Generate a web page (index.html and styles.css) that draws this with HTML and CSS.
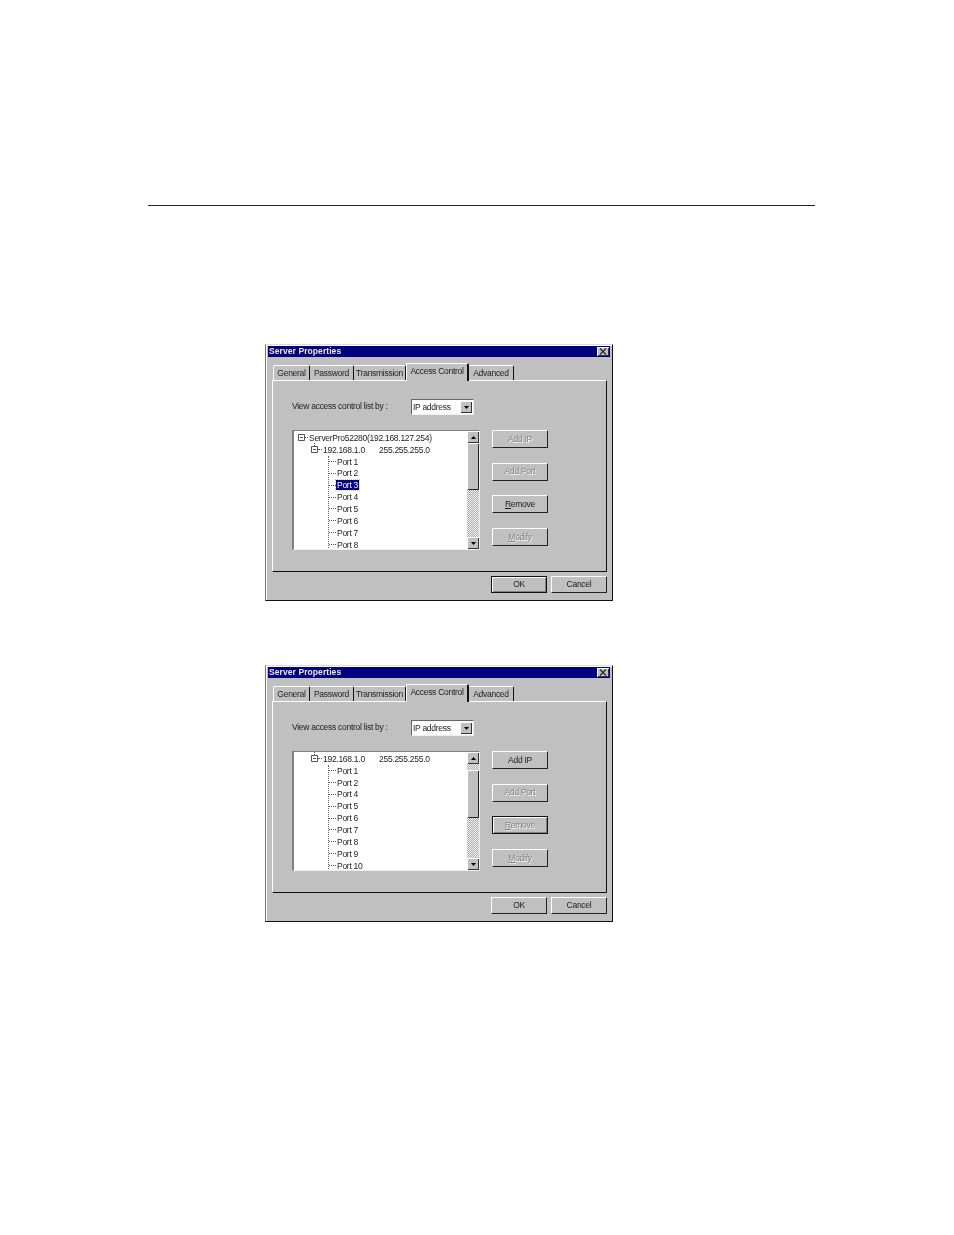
FILE: index.html
```html
<!DOCTYPE html>
<html lang="en">
<head>
<meta charset="utf-8">
<title>Server Properties</title>
<link rel="stylesheet" href="styles.css">
</head>
<body>
<hr class="rule">
<section class="dialog first">
  <header class="titlebar"><span>Server Properties</span><span class="close"><svg width="8" height="7" viewBox="0 0 8 7"><path d="M1 .5L7 6.5M7 .5L1 6.5" stroke="#222" stroke-width="1.1" fill="none"/></svg></span></header>
  <nav class="tabs">
    <span class="tab t1">General</span><span class="tab t2">Password</span><span class="tab t3">Transmission</span><span class="tab active">Access Control</span><span class="tab t5">Advanced</span>
  </nav>
  <div class="panel">
    <div class="viewrow">
      <span class="viewlabel">View access control list by :</span>
      <span class="combo"><span class="combotext">IP address</span><span class="combobtn"><svg width="5" height="3" viewBox="0 0 5 3"><path d="M0 0H5L2.5 3Z" fill="#000"/></svg></span></span>
    </div>
    <div class="listrow">
      <div class="tree">
        <div class="rows">
          <div class="row root"><svg class="box" width="7" height="7" viewBox="0 0 7 7"><path d="M.5.5h6v6h-6zM2 3.5h3" stroke="#555" fill="#fff"/></svg><span class="dash"></span><span>ServerPro52280(192.168.127.254)</span></div>
          <div class="row net"><svg class="box" width="7" height="7" viewBox="0 0 7 7"><path d="M3.5-3V0" stroke="#555" stroke-dasharray="1 1"/><path d="M.5.5h6v6h-6zM2 3.5h3" stroke="#555" fill="#fff"/></svg><span class="dash"></span><span class="ip">192.168.1.0</span><span>255.255.255.0</span></div>
          <div class="ports">
            <div class="row port"><span class="dash"></span><span>Port 1</span></div>
            <div class="row port"><span class="dash"></span><span>Port 2</span></div>
            <div class="row port"><span class="dash"></span><span class="sel">Port 3</span></div>
            <div class="row port"><span class="dash"></span><span>Port 4</span></div>
            <div class="row port"><span class="dash"></span><span>Port 5</span></div>
            <div class="row port"><span class="dash"></span><span>Port 6</span></div>
            <div class="row port"><span class="dash"></span><span>Port 7</span></div>
            <div class="row port"><span class="dash"></span><span>Port 8</span></div>
          </div>
        </div>
        <div class="scroll">
          <span class="sbtn"><svg width="5" height="3" viewBox="0 0 5 3"><path d="M0 3H5L2.5 0Z" fill="#000"/></svg></span>
          <span class="thumb thumb-a"></span>
          <span class="track"></span>
          <span class="sbtn"><svg width="5" height="3" viewBox="0 0 5 3"><path d="M0 0H5L2.5 3Z" fill="#000"/></svg></span>
        </div>
      </div>
      <div class="actions">
        <span class="btn off">Add IP</span>
        <span class="btn off">Add Port</span>
        <span class="btn"><u>R</u>emove</span>
        <span class="btn off"><u>M</u>odify</span>
      </div>
    </div>
  </div>
  <footer class="foot"><span class="btn wide focus">OK</span><span class="btn wide">Cancel</span></footer>
</section>

<section class="dialog second">
  <header class="titlebar"><span>Server Properties</span><span class="close"><svg width="8" height="7" viewBox="0 0 8 7"><path d="M1 .5L7 6.5M7 .5L1 6.5" stroke="#222" stroke-width="1.1" fill="none"/></svg></span></header>
  <nav class="tabs">
    <span class="tab t1">General</span><span class="tab t2">Password</span><span class="tab t3">Transmission</span><span class="tab active">Access Control</span><span class="tab t5">Advanced</span>
  </nav>
  <div class="panel">
    <div class="viewrow">
      <span class="viewlabel">View access control list by :</span>
      <span class="combo"><span class="combotext">IP address</span><span class="combobtn"><svg width="5" height="3" viewBox="0 0 5 3"><path d="M0 0H5L2.5 3Z" fill="#000"/></svg></span></span>
    </div>
    <div class="listrow">
      <div class="tree">
        <div class="rows">
          <div class="row net"><svg class="box" width="7" height="7" viewBox="0 0 7 7"><path d="M3.5-3V0" stroke="#555" stroke-dasharray="1 1"/><path d="M.5.5h6v6h-6zM2 3.5h3" stroke="#555" fill="#fff"/></svg><span class="dash"></span><span class="ip">192.168.1.0</span><span>255.255.255.0</span></div>
          <div class="ports">
            <div class="row port"><span class="dash"></span><span>Port 1</span></div>
            <div class="row port"><span class="dash"></span><span>Port 2</span></div>
            <div class="row port"><span class="dash"></span><span>Port 4</span></div>
            <div class="row port"><span class="dash"></span><span>Port 5</span></div>
            <div class="row port"><span class="dash"></span><span>Port 6</span></div>
            <div class="row port"><span class="dash"></span><span>Port 7</span></div>
            <div class="row port"><span class="dash"></span><span>Port 8</span></div>
            <div class="row port"><span class="dash"></span><span>Port 9</span></div>
            <div class="row port"><span class="dash"></span><span>Port 10</span></div>
          </div>
        </div>
        <div class="scroll">
          <span class="sbtn"><svg width="5" height="3" viewBox="0 0 5 3"><path d="M0 3H5L2.5 0Z" fill="#000"/></svg></span>
          <span class="track top"></span>
          <span class="thumb thumb-b"></span>
          <span class="track"></span>
          <span class="sbtn"><svg width="5" height="3" viewBox="0 0 5 3"><path d="M0 0H5L2.5 3Z" fill="#000"/></svg></span>
        </div>
      </div>
      <div class="actions">
        <span class="btn">Add IP</span>
        <span class="btn off">Add Port</span>
        <span class="btn off focus"><u>R</u>emove</span>
        <span class="btn off"><u>M</u>odify</span>
      </div>
    </div>
  </div>
  <footer class="foot"><span class="btn wide">OK</span><span class="btn wide">Cancel</span></footer>
</section>
</body>
</html>
```
FILE: styles.css
```css
* { box-sizing: border-box; }
html, body { margin: 0; padding: 0; background: #fff; }
body { width: 954px; height: 1235px; overflow: hidden; font-family: "Liberation Sans", Arial, sans-serif; font-size: 8.5px; letter-spacing: -.28px; color: #1c1c1c; }
.rule { width: 667px; height: 1px; margin: 205px 0 0 148px; border: 0; background: #222; }
.dialog { width: 348px; height: 257px; margin-left: 265px; padding: 1px 1px 0 1px; background: #c0c0c0; border-style: solid; border-width: 1px; border-color: #ddd #111 #111 #777; box-shadow: inset 1px 1px 0 #fff; filter: blur(.3px); }
.first { margin-top: 138px; }
.second { margin-top: 64px; }
.titlebar { height: 11px; margin: 0 1px 0 1px; padding: 0 1px 0 1px; display: flex; align-items: center; justify-content: space-between; background: #000080; color: #e8e8e8; font-weight: 700; font-size: 8.5px; letter-spacing: .08px; line-height: 11px; }
.close { width: 12px; height: 9px; display: flex; align-items: center; justify-content: center; background: #c0c0c0; box-shadow: inset 1px 1px 0 #fff, inset -1px -1px 0 #333; }
.tabs { height: 23px; padding-left: 6px; display: flex; align-items: flex-end; }
.tab { height: 15px; padding-bottom: 1px; display: flex; align-items: center; justify-content: center; background: #c0c0c0; border-top: 1px solid #fff; border-right: 1px solid #111; border-top-right-radius: 2px; white-space: nowrap; }
.t1 { width: 37px; border-left: 1px solid #fff; border-top-left-radius: 2px; }
.t2 { width: 44px; }
.t3 { width: 52px; }
.t5 { width: 45px; }
.active { position: relative; z-index: 1; width: 63px; height: 18px; margin-bottom: -1px; padding-bottom: 3px; border-left: 1px solid #fff; border-right: 2px solid #111; }
.panel { width: 335px; height: 192px; margin-left: 5px; padding: 18px 0 0 19px; border-style: solid; border-width: 1px; border-color: #fff #111 #111 #fff; }
.viewrow { height: 16px; display: flex; align-items: center; gap: 22px; }
.viewlabel { width: 97px; white-space: nowrap; margin-top: -2px; }
.combo { width: 63px; height: 16px; display: flex; align-items: center; justify-content: space-between; padding: 1px; background: #fff; border: 1px solid; border-color: #666 #eee #eee #666; }
.combotext { padding-left: 0; }
.combobtn, .sbtn { display: flex; align-items: center; justify-content: center; background: #c0c0c0; box-shadow: inset 1px 1px 0 #fff, inset -1px -1px 0 #333; }
.combobtn { width: 12px; height: 12px; }
.listrow { margin-top: 15px; display: flex; gap: 12px; }
.tree { width: 188px; height: 120px; display: flex; background: #fff; border-style: solid; border-width: 1px 1px 1px 2px; border-color: #808080 #eee #eee #808080; overflow: hidden; }
.rows { width: 173px; padding: 1px 0 0 4px; overflow: hidden; }
.row { height: 11.85px; display: flex; align-items: center; white-space: nowrap; line-height: 10px; }
.box { overflow: visible; flex: none; }
.dash { width: 3px; height: 0; margin: 0 1px 0 0; border-top: 1px dotted #555; flex: none; }
.net { padding-left: 13px; }
.net .dash { width: 4px; }
.ip { width: 56px; }
.ports { margin-left: 30px; border-left: 1px dotted #666; }
.port .dash { width: 7px; margin-right: 1px; }
.port .sel { margin-left: -1px; padding: 0 1px; height: 10px; background: #000080; color: #fff; outline: 1px dotted #cc9; }
.scroll { width: 12px; margin-left: 1px; display: flex; flex-direction: column; }
.sbtn { flex: none; width: 12px; height: 12px; }
.thumb { flex: none; width: 12px; background: #c0c0c0; box-shadow: inset 1px 1px 0 #fff, inset -1px -1px 0 #222; }
.thumb-a { height: 47px; }
.thumb-b { height: 48px; }
.track { flex: 1; background: repeating-conic-gradient(#eee 0 25%, #b0b0b0 0 50%) 0 0 / 2px 2px; }
.track.top { flex: none; height: 6px; }
.actions { width: 56px; display: flex; flex-direction: column; gap: 14.7px; }
.btn { width: 56px; height: 18px; padding-bottom: 1px; display: flex; align-items: center; justify-content: center; background: #c0c0c0; border-style: solid; border-width: 1px; border-color: #fff #222 #222 #fff; white-space: nowrap; }
.off { color: #808080; text-shadow: .6px .6px 0 #fff; }
.focus { border: 1px solid #111; box-shadow: inset 1px 1px 0 #fff, inset -1px -1px 0 #808080; }
.foot { margin-top: 4px; padding-left: 224px; display: flex; gap: 4px; }
.wide { height: 17px; padding-bottom: 2px; }
```
